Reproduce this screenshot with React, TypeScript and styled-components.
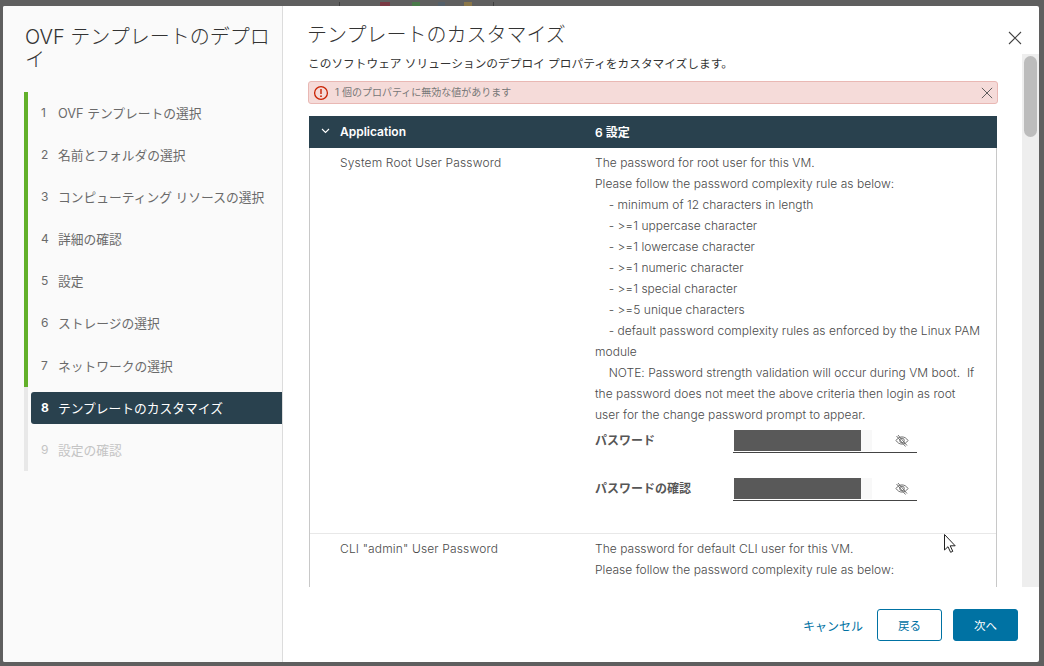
import styled, { createGlobalStyle } from 'styled-components';

const GlobalStyle = createGlobalStyle`
  html, body {
    margin: 0;
    padding: 0;
    height: 666px;
    overflow: hidden;
    background: #5f5f5f;
  }
  * {
    box-sizing: border-box;
  }
`;

const FONT = `Inter, "Noto Sans CJK JP", sans-serif`;

const Page = styled.div`
  position: relative;
  width: 1044px;
  height: 666px;
  padding: 6px 5px 4px 3px;
  font-family: ${FONT};
  overflow: hidden;
`;

const BackdropMark = styled.div<{ $left: number; $color: string; $width: number }>`
  position: absolute;
  top: 2px;
  left: ${({ $left }) => $left}px;
  width: ${({ $width }) => $width}px;
  height: 4px;
  background: ${({ $color }) => $color};
`;

const Modal = styled.div`
  position: relative;
  display: flex;
  width: 100%;
  height: 100%;
  background: #fff;
  border-radius: 2px;
  overflow: hidden;
`;

const Sidebar = styled.aside`
  flex: 0 0 280px;
  padding: 20px 0 0 21px;
  background: #fafafa;
  border-right: 1px solid #dcdcdc;
`;

const SidebarTitle = styled.h2`
  margin: 0 9px 19.5px 1px;
  font-size: 20px;
  font-weight: 300;
  line-height: 23px;
  color: #333;
`;

const StepList = styled.ol`
  margin: 0;
  padding: 0;
  list-style: none;
`;

const StepItem = styled.li<{ $barColor: string }>`
  height: 42.2px;
  padding: 5px 0 5px 3px;
  border-left: 4px solid ${({ $barColor }) => $barColor};
`;

const StepButton = styled.div<{ $state: 'done' | 'active' | 'todo' }>`
  display: flex;
  align-items: center;
  height: 32px;
  padding: 0 0 1px 10px;
  font-size: 12.75px;
  border-radius: 3px 0 0 3px;
  background: ${({ $state }) => ($state === 'active' ? '#29414e' : 'transparent')};
  color: ${({ $state }) => ($state === 'active' ? '#fff' : $state === 'todo' ? '#c4c4c4' : '#6a6a6a')};
`;

const StepNumber = styled.span<{ $bold: boolean }>`
  flex: 0 0 17px;
  font-size: 12px;
  font-weight: ${({ $bold }) => ($bold ? 700 : 400)};
`;

const Main = styled.main`
  flex: 1;
  min-width: 0;
  display: flex;
  flex-direction: column;
`;

const MainHeader = styled.header`
  flex: 0 0 48px;
  display: flex;
  justify-content: space-between;
  padding: 16px 16px 0 24px;
`;

const Heading = styled.h1`
  margin: 0;
  font-size: 20px;
  font-weight: 300;
  line-height: 26px;
  color: #333;
`;

const CloseButton = styled.button`
  display: flex;
  align-items: center;
  justify-content: center;
  width: 16px;
  height: 16px;
  margin-top: 8px;
  padding: 0;
  border: none;
  background: none;
`;

const ScrollArea = styled.div`
  flex: 1;
  min-height: 0;
  display: flex;
`;

const ScrollContent = styled.div`
  flex: 1;
  min-width: 0;
  padding: 0 24px 0 25px;
  overflow: hidden;
`;

const ScrollTrack = styled.div`
  flex: 0 0 17px;
  padding: 2px;
  background: #eeeeee;
`;

const ScrollThumb = styled.div`
  height: 81px;
  background: #bcbcbc;
  border-radius: 7px;
`;

const Subtitle = styled.p`
  margin: 0 0 8px;
  height: 19px;
  padding-top: 1px;
  font-size: 11.7px;
  line-height: 18px;
  color: #333;
  white-space: nowrap;
`;

const Alert = styled.div`
  display: flex;
  align-items: center;
  height: 23px;
  margin-bottom: 12px;
  padding: 0 4px;
  background: #f5dbd9;
  border: 1px solid #e9b8b4;
  border-radius: 3px;
`;

const AlertText = styled.span`
  flex: 1;
  margin: 0 0 2px 6px;
  font-size: 10px;
  color: #777;
`;

const Table = styled.section`
  margin: 0 1px;
  border-left: 1px solid #c8c8c8;
  border-right: 1px solid #c8c8c8;
`;

const TableHeader = styled.div`
  display: grid;
  grid-template-columns: 286px 1fr;
  align-items: center;
  height: 32px;
  margin: 0 -1px;
  padding-bottom: 2px;
  background: #29414e;
  color: #fff;
  font-size: 12px;
  font-weight: 600;
`;

const GroupToggle = styled.div`
  display: flex;
  align-items: center;
  gap: 10px;
  padding-left: 12px;
`;

const PropertyRow = styled.div`
  display: grid;
  grid-template-columns: 285px 1fr;
  padding: 4px 13px 32px 0;
  border-bottom: 1px solid #e8e8e8;
`;

const PropertyName = styled.div`
  padding-left: 30px;
  font-size: 12px;
  line-height: 21px;
  font-weight: 300;
  letter-spacing: 0.15px;
  color: #4a4a4a;
`;

const Description = styled.div`
  font-size: 12px;
  line-height: 21px;
  font-weight: 300;
  letter-spacing: 0.03px;
  color: #4a4a4a;
  white-space: pre-wrap;
`;

const Field = styled.div`
  display: flex;
  align-items: flex-end;
  height: 26px;
  margin-top: 22px;
  ${Description} + & {
    margin-top: 2px;
  }
`;

const FieldLabel = styled.label`
  flex: 0 0 138px;
  align-self: center;
  margin-top: -1px;
  font-size: 12px;
  font-weight: 700;
  color: #565656;
`;

const FieldInput = styled.div`
  display: flex;
  align-items: center;
  justify-content: space-between;
  width: 184px;
  height: 24px;
  padding: 0 8px 0 1px;
  border-bottom: 1px solid #444;
`;

const InputFill = styled.div`
  width: 138px;
  height: 21px;
  background: #f8f8f8;
`;

const MaskedValue = styled.div`
  width: 127px;
  height: 21px;
  background: #595959;
`;

const Footer = styled.footer`
  flex: 0 0 75px;
  display: flex;
  align-items: flex-start;
  justify-content: flex-end;
  gap: 11px;
  padding: 22px 21px 0 0;
`;

const TextButton = styled.button`
  height: 32px;
  margin-right: 3px;
  padding: 0;
  border: none;
  background: none;
  color: #0072a3;
  font-family: ${FONT};
  font-size: 12px;
`;

const OutlineButton = styled.button`
  width: 65px;
  height: 32px;
  padding: 0;
  border: 1px solid #0072a3;
  border-radius: 3px;
  background: #fff;
  color: #0072a3;
  font-family: ${FONT};
  font-size: 11.5px;
`;

const PrimaryButton = styled(OutlineButton)`
  background: #0072a3;
  color: #fff;
`;

const Cursor = styled.svg`
  position: absolute;
  left: 943px;
  top: 533px;
`;

const STEPS = [
  'OVF テンプレートの選択',
  '名前とフォルダの選択',
  'コンピューティング リソースの選択',
  '詳細の確認',
  '設定',
  'ストレージの選択',
  'ネットワークの選択',
  'テンプレートのカスタマイズ',
  '設定の確認',
];
const ACTIVE_STEP = 7;

const BACKDROP_MARKS = [
  { left: 339, width: 1, color: '#3f3f3f' },
  { left: 380, width: 10, color: '#7a3a44' },
  { left: 412, width: 8, color: '#4a7a4a' },
  { left: 438, width: 7, color: '#54606a' },
  { left: 464, width: 8, color: '#8a7648' },
  { left: 493, width: 1, color: '#3f3f3f' },
];

const ROOT_DESCRIPTION = `The password for root user for this VM.
Please follow the password complexity rule as below:
    - minimum of 12 characters in length
    - >=1 uppercase character
    - >=1 lowercase character
    - >=1 numeric character
    - >=1 special character
    - >=5 unique characters
    - default password complexity rules as enforced by the Linux PAM module
    NOTE: Password strength validation will occur during VM boot.  If the password does not meet the above criteria then login as root user for the change password prompt to appear.`;

const CLI_DESCRIPTION = `The password for default CLI user for this VM.
Please follow the password complexity rule as below:`;

function CrossIcon({ size, color }: { size: number; color: string }) {
  return (
    <svg width={size} height={size} viewBox="0 0 14 14" fill="none">
      <path d="M1 1l12 12M13 1L1 13" stroke={color} strokeWidth="1.1" />
    </svg>
  );
}

function AlertIcon() {
  return (
    <svg width="16" height="16" viewBox="0 0 16 16" fill="none">
      <circle cx="8" cy="8" r="6.4" stroke="#c92100" strokeWidth="1.3" />
      <path d="M8 4v5" stroke="#c92100" strokeWidth="1.4" />
      <circle cx="8" cy="11.2" r="0.9" fill="#c92100" />
    </svg>
  );
}

function EyeHideIcon() {
  return (
    <svg width="14" height="13" viewBox="0 0 14 13" fill="none" stroke="#666" strokeWidth="0.9">
      <path d="M1 6.5c1.6-2.4 3.6-3.6 6-3.6s4.4 1.2 6 3.6c-1.6 2.4-3.6 3.6-6 3.6s-4.4-1.2-6-3.6z" />
      <circle cx="7" cy="6.5" r="2.3" />
      <path d="M3 1l9 10.5M1.5 2l9 10.5" />
    </svg>
  );
}

function PasswordField({ label }: { label: string }) {
  return (
    <Field>
      <FieldLabel>{label}</FieldLabel>
      <FieldInput>
        <InputFill>
          <MaskedValue />
        </InputFill>
        <EyeHideIcon />
      </FieldInput>
    </Field>
  );
}

export default function App() {
  return (
    <Page>
      <GlobalStyle />
      {BACKDROP_MARKS.map((mark) => (
        <BackdropMark key={mark.left} $left={mark.left} $width={mark.width} $color={mark.color} />
      ))}
      <Modal>
        <Sidebar>
          <SidebarTitle>OVF テンプレートのデプロイ</SidebarTitle>
          <StepList>
            {STEPS.map((step, i) => {
              const state = i < ACTIVE_STEP ? 'done' : i === ACTIVE_STEP ? 'active' : 'todo';
              return (
                <StepItem key={step} $barColor={state === 'done' ? '#62b02a' : '#e8e8e8'}>
                  <StepButton $state={state}>
                    <StepNumber $bold={state === 'active'}>{i + 1}</StepNumber>
                    {step}
                  </StepButton>
                </StepItem>
              );
            })}
          </StepList>
        </Sidebar>
        <Main>
          <MainHeader>
            <Heading>テンプレートのカスタマイズ</Heading>
            <CloseButton aria-label="閉じる">
              <CrossIcon size={14} color="#444" />
            </CloseButton>
          </MainHeader>
          <ScrollArea>
            <ScrollContent>
              <Subtitle>このソフトウェア ソリューションのデプロイ プロパティをカスタマイズします。</Subtitle>
              <Alert>
                <AlertIcon />
                <AlertText>1 個のプロパティに無効な値があります</AlertText>
                <CrossIcon size={12} color="#555" />
              </Alert>
              <Table>
                <TableHeader>
                  <GroupToggle>
                    <svg width="9" height="6" viewBox="0 0 9 6" fill="none">
                      <path d="M1 1l3.5 3.5L8 1" stroke="#fff" strokeWidth="1.1" />
                    </svg>
                    Application
                  </GroupToggle>
                  <span>6 設定</span>
                </TableHeader>
                <PropertyRow>
                  <PropertyName>System Root User Password</PropertyName>
                  <div>
                    <Description>{ROOT_DESCRIPTION}</Description>
                    <PasswordField label="パスワード" />
                    <PasswordField label="パスワードの確認" />
                  </div>
                </PropertyRow>
                <PropertyRow>
                  <PropertyName>CLI "admin" User Password</PropertyName>
                  <Description>{CLI_DESCRIPTION}</Description>
                </PropertyRow>
              </Table>
            </ScrollContent>
            <ScrollTrack>
              <ScrollThumb />
            </ScrollTrack>
          </ScrollArea>
          <Footer>
            <TextButton>キャンセル</TextButton>
            <OutlineButton>戻る</OutlineButton>
            <PrimaryButton>次へ</PrimaryButton>
          </Footer>
        </Main>
      </Modal>
      <Cursor width="15" height="21" viewBox="0 0 15 21" fill="#fff" stroke="#222" strokeWidth="1">
        <path d="M1.5 1.5v15.500l3.500-3.300 2.600 5.600 2.200-1-2.600-5.500h5z" />
      </Cursor>
    </Page>
  );
}
